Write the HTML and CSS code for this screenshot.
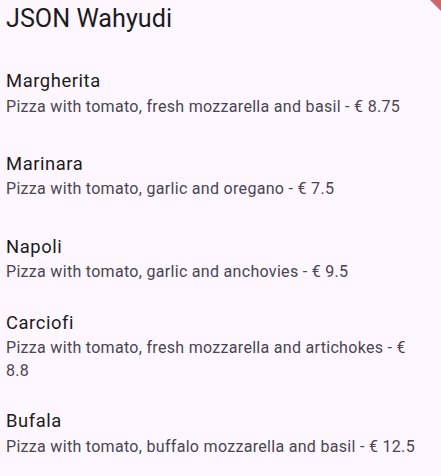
FILE: index.html
```html
<!DOCTYPE html>
<html lang="en">
<head>
<meta charset="utf-8">
<title>JSON Wahyudi</title>
<link rel="stylesheet" href="styles.css">
</head>
<body>
<div class="screen">
  <header class="app-bar">
    <h1 class="app-title">JSON Wahyudi</h1>
  </header>
  <ul class="pizza-list">
    <li class="tile">
      <div class="tile-title">Margherita</div>
      <div class="tile-subtitle">Pizza with tomato, fresh mozzarella and basil - € 8.75</div>
    </li>
    <li class="tile">
      <div class="tile-title">Marinara</div>
      <div class="tile-subtitle">Pizza with tomato, garlic and oregano - € 7.5</div>
    </li>
    <li class="tile">
      <div class="tile-title">Napoli</div>
      <div class="tile-subtitle">Pizza with tomato, garlic and anchovies - € 9.5</div>
    </li>
    <li class="tile">
      <div class="tile-title">Carciofi</div>
      <div class="tile-subtitle">Pizza with tomato, fresh mozzarella and artichokes - € 8.8</div>
    </li>
    <li class="tile">
      <div class="tile-title">Bufala</div>
      <div class="tile-subtitle">Pizza with tomato, buffalo mozzarella and basil - € 12.5</div>
    </li>
  </ul>
  <div class="debug-banner" aria-hidden="true"></div>
</div>
</body>
</html>
```
FILE: styles.css
```css
html, body {
  margin: 0;
  padding: 0;
  background: #FEF7FF;
}

body {
  font-family: Roboto, "Noto Sans", sans-serif;
  color: #1D1B20;
}

.screen {
  position: relative;
  width: 441px;
  height: 476px;
  overflow: hidden;
  background: #FEF7FF;
}

.app-bar {
  box-sizing: border-box;
  height: 51px;
  padding: 3px 6px 0 6px;
}

.app-title {
  margin: 0;
  font-size: 25.2px;
  line-height: 31.8px;
  font-weight: 400;
  color: #1D1B20;
}

.pizza-list {
  list-style: none;
  margin: 0;
  padding: 0;
}

.tile {
  box-sizing: border-box;
  min-height: 82.8px;
  padding: 9.2px 15px 9.2px 6px;
  display: flex;
  flex-direction: column;
  justify-content: center;
}

.tile-title {
  font-size: 18.4px;
  line-height: 27.6px;
  letter-spacing: 0.57px;
  color: #1D1B20;
}

.tile-subtitle {
  font-size: 16.05px;
  line-height: 23px;
  letter-spacing: 0.29px;
  color: #49454F;
}

.debug-banner {
  position: absolute;
  top: 0;
  right: 0;
  width: 11px;
  height: 11px;
  background: #C9666A;
  clip-path: polygon(0 0, 100% 0, 100% 100%);
}
```
